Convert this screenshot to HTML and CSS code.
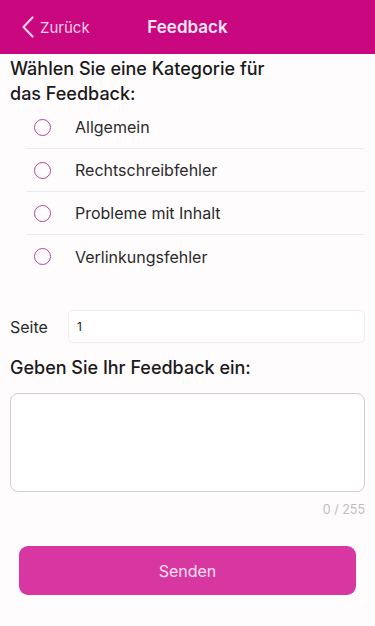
FILE: index.html
```html
<!DOCTYPE html>
<html lang="de">
<head>
	<meta charset="UTF-8">
	<title>Feedback</title>
	<link rel="stylesheet" href="styles.css">
</head>
<body>
	<div class="header">
		<div class="back">
			<svg width="12" height="22" viewBox="0 0 12 22"><path d="M10.5 1.5 L1.5 11 L10.5 20.5" fill="none" stroke="#f6cfe6" stroke-width="2.2" stroke-linecap="round" stroke-linejoin="round"/></svg>
			<span>Zurück</span>
		</div>
		<div class="title">Feedback</div>
	</div>
	<div class="content">
		<h2 class="heading">Wählen Sie eine Kategorie für das Feedback:</h2>
		<ul class="options">
			<li><span class="radio"></span>Allgemein</li>
			<li><span class="radio"></span>Rechtschreibfehler</li>
			<li><span class="radio"></span>Probleme mit Inhalt</li>
			<li><span class="radio"></span>Verlinkungsfehler</li>
		</ul>
		<div class="page-row">
			<label>Seite</label>
			<div class="page-input">1</div>
		</div>
		<h2 class="heading second">Geben Sie Ihr Feedback ein:</h2>
		<div class="textarea"></div>
		<div class="counter">0 / 255</div>
		<div class="button">Senden</div>
	</div>
</body>
</html>
```

FILE: styles.css
```css
*{margin: 0;padding: 0;box-sizing: border-box;}
body{
	background: #fffcfe;
	font-family: Inter, "Noto Sans", sans-serif;
	color: #1c1c1e;
	width: 375px;
	height: 626px;
	overflow: hidden;
}
ul{list-style: none;}
.header{
	height: 54px;
	background: #c9077f;
	display: flex;
	align-items: center;
	justify-content: center;
	position: relative;
}
.back{
	position: absolute;
	left: 22px;
	top: 16px;
	display: flex;
	align-items: center;
	gap: 6px;
	color: #f6cfe6;
	font-size: 15px;
}
.title{
	color: #fbe6f2;
	font-size: 17px;
	font-weight: 600;
}
.content{
	padding: 2px 10px 0;
}
.heading{
	font-size: 18px;
	font-weight: 500;
	line-height: 25px;
	width: 290px;
	color: #1a1a1a;
}
.options{
	margin-left: 16px;
}
.options li{
	height: 43px;
	display: flex;
	align-items: center;
	padding-left: 8px;
	font-size: 16px;
	color: #2a2a2a;
	border-bottom: 1px solid #ececec;
}
.options li:last-child{
	border-bottom: none;
}
.radio{
	width: 17px;
	height: 17px;
	border: 1.8px solid #b5468f;
	border-radius: 50%;
	margin-right: 24px;
}
.page-row{
	display: flex;
	align-items: center;
	margin-top: 32px;
}
.page-row label{
	width: 58px;
	font-size: 16px;
	color: #2a2a2a;
}
.page-input{
	flex: 1;
	height: 33px;
	border: 1px solid #eeeeee;
	border-radius: 5px;
	background: #fff;
	font-size: 12px;
	padding-left: 8px;
	line-height: 31px;
}
.heading.second{
	width: auto;
	margin-top: 12px;
}
.textarea{
	height: 99px;
	margin-top: 13px;
	border: 1.5px solid #cfcfcf;
	border-radius: 8px;
	background: #fff;
}
.counter{
	text-align: right;
	font-size: 12.5px;
	color: #bdbdbd;
	margin-top: 10px;
}
.button{
	margin: 29px 9px 0;
	height: 49px;
	background: #d836a0;
	border-radius: 9px;
	color: #fbe0f1;
	font-size: 16px;
	display: flex;
	align-items: center;
	justify-content: center;
}
```
